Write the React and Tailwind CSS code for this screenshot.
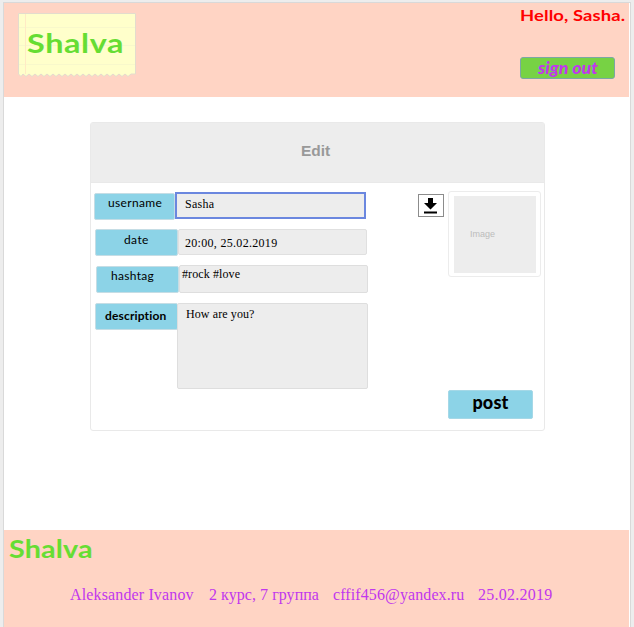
import React from 'react';

function Label({ className, children }) {
  return (
    <div className={`h-[27px] shrink-0 rounded-[2px] border border-[#c5dde5] bg-[#8cd3e7] whitespace-nowrap text-black ${className}`}>
      {children}
    </div>
  );
}

function Field({ className, children }) {
  return (
    <div className={`shrink-0 whitespace-nowrap bg-[#ededed] font-['Liberation_Serif',serif] text-[12px] leading-[14px] text-black ${className}`}>
      {children}
    </div>
  );
}

function Header() {
  return (
    <header className="flex h-[94px] w-[625px] justify-between bg-[#ffd4c4]">
      <div className="relative ml-[14px] mt-[10px] h-[65px] w-[118px]">
        <svg className="absolute inset-0" width="118" height="65" viewBox="0 0 118 65">
          <path
            d="M.5 .5H117.5V61H113L110 63.5 107 61 104 63.5 101 61 98 63.5 95 61 92 63.5 89 61 86 63.5 83 61 80 63.5 77 61 74 63.5 71 61 68 63.5 65 61 62 63.5 59 61 56 63.5 53 61 50 63.5 47 61 44 63.5 41 61 38 63.5 35 61 32 63.5 29 61 26 63.5 23 61 20 63.5 17 61 14 63.5 11 61 8 63.5 5 61 3 63.5 .5 61Z"
            fill="#ffffcb"
            stroke="#e3dccd"
          />
          <path d="M1 14.5H117M1 32.5H117M1 51.5H117" stroke="#f8f8cb" />
          <path d="M7.5 1V61" stroke="#ffeac5" />
        </svg>
        <div className="relative ml-[9px] mt-[14px] w-max origin-left scale-x-[1.2] whitespace-nowrap font-['Lato',sans-serif] text-[27px] font-bold leading-[32px] tracking-[0.5px] text-[#66dd33]">Shalva</div>
      </div>
      <div className="mr-[13px] flex w-[96px] flex-col">
        <div className="mt-[2px] w-max origin-left scale-x-[1.15] whitespace-nowrap font-['Lato',sans-serif] text-[16px] font-bold leading-[20px] tracking-[0.1px] text-[#ff0000]">Hello, Sasha.</div>
        <button className="mt-[32px] flex h-[22px] w-[95px] shrink-0 items-start whitespace-nowrap rounded-[3px] border border-[#7ba7a5] bg-[#77d244] pl-[17px] font-['Lato',sans-serif] text-[16px] font-black italic leading-[20px] text-[#c137ed]">
          <span className="origin-left scale-x-[1.11]">sign out</span>
        </button>
      </div>
    </header>
  );
}

function EditPanel() {
  return (
    <section className="ml-[86px] mt-[25px] h-[309px] w-[455px] rounded-[3px] border border-[#e9e9e9] bg-white">
      <div className="h-[60px] border-b border-[#e9e9e9] bg-[#ededed] pl-[210px] pt-[18px] font-['Liberation_Sans',Arial,sans-serif] text-[15.5px] font-bold leading-[19px] text-[#999999]">Edit</div>
      <div className="flex">
        <div className="flex w-[327px] shrink-0 flex-col">
          <div className="ml-[3px] mt-[9px] flex items-start">
            <Label className="mt-px w-[81px] pl-[13px] pt-px font-['Lato',sans-serif] text-[12px] leading-[15px] tracking-[0.35px]">username</Label>
            <Field className="h-[27px] w-[191px] border-2 border-[#6b87df] pl-[8px] pt-[3px] tracking-[0.3px]">Sasha</Field>
          </div>
          <div className="ml-[4px] mt-[9px] flex items-start">
            <Label className="w-[83px] pl-[28px] pt-[2px] font-['Lato',sans-serif] text-[12px] leading-[15px] tracking-[0.4px]">date</Label>
            <Field className="h-[26px] w-[189px] rounded-[2px] border border-[#e0e0e0] pl-[6px] pt-[6px] tracking-[0.3px]">20:00, 25.02.2019</Field>
          </div>
          <div className="ml-[5px] mt-[9px] flex items-start">
            <Label className="mt-px w-[83px] pl-[14px] pt-px font-['Lato',sans-serif] text-[12px] leading-[15px] tracking-[0.3px]">hashtag</Label>
            <Field className="h-[28px] w-[189px] rounded-[2px] border border-[#dedede] pl-[2px] pt-px tracking-[0.1px]">#rock #love</Field>
          </div>
          <div className="ml-[4px] mt-[10px] flex items-start">
            <Label className="w-[83px] pl-[9px] pt-[4px] font-['Lato',sans-serif] text-[12px] font-bold leading-[15px] tracking-[0.15px]">description</Label>
            <Field className="-ml-px h-[86px] w-[191px] rounded-[2px] border border-[#dedede] pl-[8px] pt-[3px] tracking-[0.1px]">How are you?</Field>
          </div>
        </div>
        <button className="mt-[11px] flex h-[23px] w-[26px] shrink-0 items-center justify-center border border-[#8c8c8c] bg-white">
          <svg width="14" height="16" viewBox="0 0 14 16">
            <path d="M4 0H9V5H13L6.5 11.5 0 5H4ZM0 13.5H13V15.5H0Z" fill="#000" />
          </svg>
        </button>
        <div className="ml-[4px] mt-[8px] flex w-[94px] shrink-0 flex-col">
          <div className="h-[86px] w-[93px] rounded-[3px] border border-[#ececec] p-[5px] pt-[4px]">
            <div className="h-[77px] w-[82px] bg-[#ededed] pl-[16px] pt-[32px] font-['Liberation_Sans',Arial,sans-serif] text-[9px] leading-[12px] text-[#bcbcbc]">Image</div>
          </div>
          <button className="mt-[113px] h-[29px] w-[85px] rounded-[2px] border border-[#a5d8e7] bg-[#8cd3e7] pb-[5px] font-['Lato',sans-serif] text-[18px] font-black leading-[22px] tracking-[0.2px] text-black">post</button>
        </div>
      </div>
    </section>
  );
}

function Footer() {
  return (
    <footer className="h-[97px] w-[625px] bg-[#ffd4c4]">
      <div className="ml-[5px] w-max origin-left scale-x-[1.2] pt-[4px] font-['Lato',sans-serif] text-[24px] font-bold leading-[30px] tracking-[0.1px] text-[#66dd33]">Shalva</div>
      <div className="ml-[66px] mt-[21px] flex whitespace-nowrap font-['Liberation_Serif',serif] text-[16px] leading-[20px] text-[#c137ed]">
        <span className="w-[139px] tracking-[0.14px]">Aleksander Ivanov</span>
        <span className="w-[124px] tracking-[0.05px]">2 курс, 7 группа</span>
        <span className="w-[145px] tracking-[0.1px]">cffif456@yandex.ru</span>
        <span className="tracking-[0.25px]">25.02.2019</span>
      </div>
    </footer>
  );
}

export default function App() {
  return (
    <div className="h-[627px] w-[634px] overflow-hidden bg-[#ededed] pl-[3px] pt-[2px]">
      <div className="flex h-[625px] w-[628px] flex-col border-l border-t border-r border-[#d9d9d9] bg-white">
        <Header />
        <EditPanel />
        <div className="grow" />
        <Footer />
      </div>
    </div>
  );
}
